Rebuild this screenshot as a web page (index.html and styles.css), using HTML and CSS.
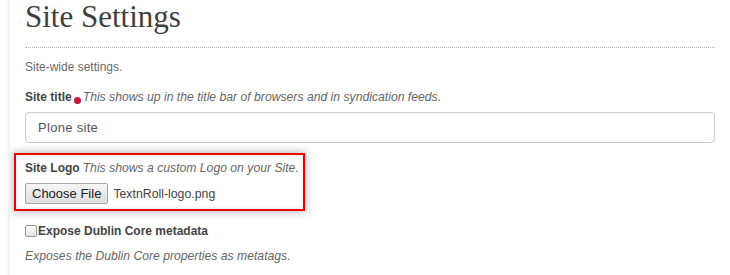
FILE: index.html
```html
<!DOCTYPE html>
<html>
<head>
<meta charset="utf-8">
<link rel="stylesheet" href="styles.css">
</head>
<body>
<div class="page">
  <h1 class="title">Site Settings</h1>
  <p class="desc">Site-wide settings.</p>
  <div class="field">
    <div class="label-row"><span class="label">Site title</span><span class="req"></span><span class="help">This shows up in the title bar of browsers and in syndication feeds.</span></div>
    <div class="input">Plone site</div>
  </div>
  <div class="highlight">
    <div class="label-row"><span class="label">Site Logo</span> <span class="help">This shows a custom Logo on your Site.</span></div>
    <div class="file-row"><span class="btn">Choose File</span><span class="filename">TextnRoll-logo.png</span></div>
  </div>
  <div class="check-row"><span class="checkbox"></span><span class="label">Expose Dublin Core metadata</span></div>
  <p class="help help-block">Exposes the Dublin Core properties as metatags.</p>
</div>
</body>
</html>
```
FILE: styles.css
```css
html, body { margin: 0; padding: 0; background: #fff; }
body { font-family: "Liberation Sans", Arial, sans-serif; color: #333; }
.page {
  margin-left: 10px;
  min-height: 275px;
  padding: 0 15px 0 15px;
  box-shadow: -2px 0 3px rgba(0,0,0,0.07);
  overflow: hidden;
}
.title {
  font-family: "Liberation Serif", serif;
  font-weight: normal;
  font-size: 31px;
  color: #3f3f3f;
  margin: 0;
  padding: 2px 0 15px 0;
  line-height: 30px;
  border-bottom: 1px dotted #b5b5b5;
}
.desc { margin: 12px 0 0 0; font-size: 12px; line-height: 14px; color: #6a6a6a; }
.field { margin-top: 16px; }
.label-row { font-size: 12px; line-height: 14px; display: flex; align-items: baseline; white-space: nowrap; }
.label { font-weight: bold; color: #444; }
.req { width: 7px; height: 7px; border-radius: 50%; background: #c4183c; margin: 0 2px 0 2px; position: relative; top: 3px; align-self: center; }
.help { font-style: italic; color: #666; font-size: 12.2px; }
.highlight .label-row .help { margin-left: 3px; }
.input {
  margin-top: 8px;
  height: 29px;
  border: 1px solid #ccc;
  border-radius: 4px;
  font-size: 13px;
  line-height: 29px;
  color: #555;
  padding-left: 12px;
  letter-spacing: 0.3px;
  box-shadow: inset 0 1px 1px rgba(0,0,0,0.04);
}
.highlight {
  margin: 10px 0 0 -11px;
  width: 278px;
  padding: 6px 0 5px 9px;
  border: 2px solid #ee0000;
  box-shadow: 0 0 8px 1px rgba(0,0,0,0.28), inset 0 0 5px rgba(0,0,0,0.12);
}
.file-row { margin-top: 8px; display: flex; align-items: center; }
.btn {
  display: inline-block;
  height: 19px;
  line-height: 19px;
  padding: 0 6px;
  font-size: 13px;
  color: #222;
  border: 1px solid #a6a6a6;
  border-radius: 2px;
  background: linear-gradient(#f6f6f6, #dedede);
}
.filename { margin-left: 5px; font-size: 12.3px; color: #444; }
.check-row { margin-top: 13px; display: flex; align-items: center; font-size: 12px; line-height: 14px; }
.checkbox {
  width: 10px; height: 10px;
  border: 1px solid #9a9a9a;
  border-radius: 2px;
  background: linear-gradient(#fcfcfc, #e2e2e2);
  margin-right: 1px;
}
.help-block { margin: 11px 0 0 0; line-height: 14px; }
```
